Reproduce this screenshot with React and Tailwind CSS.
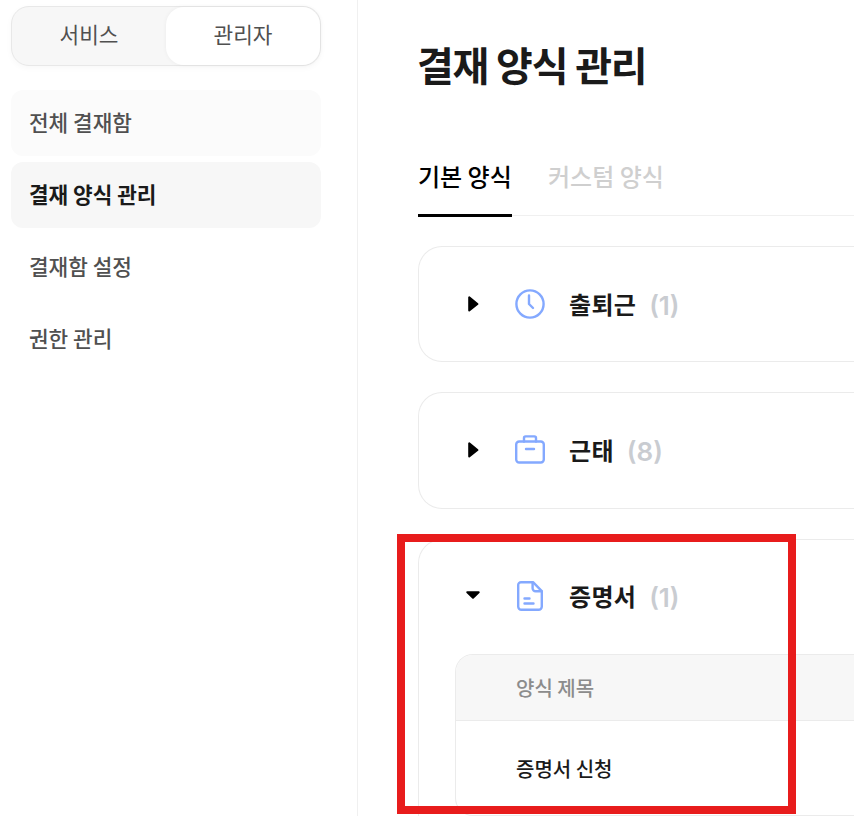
const font = { fontFamily: '"Noto Sans CJK KR", "Noto Sans", sans-serif' };

function Caret({ open }) {
  return (
    <svg width="16" height="16" viewBox="0 0 16 16" className="shrink-0">
      {open ? (
        <path d="M1.3 4.2h11.4L7 9.8z" fill="#000" stroke="#000" strokeWidth="2" strokeLinejoin="round" />
      ) : (
        <path d="M3.2 1.4v13L11.4 8z" fill="#000" stroke="#000" strokeWidth="2" strokeLinejoin="round" />
      )}
    </svg>
  );
}

const iconProps = {
  width: 30,
  height: 30,
  viewBox: "0 0 30 30",
  fill: "none",
  stroke: "#84a9ff",
  strokeWidth: 2.4,
  strokeLinecap: "round",
  strokeLinejoin: "round",
  className: "shrink-0",
};

function Clock() {
  return (
    <svg {...iconProps}>
      <circle cx="15" cy="15" r="13.6" />
      <path d="M14 6.5V15l4 4" />
    </svg>
  );
}

function Bag() {
  return (
    <svg {...iconProps}>
      <rect x="1.2" y="6.5" width="27.6" height="21" rx="3" />
      <path d="M9 6.5V3a1.6 1.6 0 0 1 1.6-1.6h8.8A1.6 1.6 0 0 1 21 3v3.5M11 14h8" />
    </svg>
  );
}

function Doc() {
  return (
    <svg {...iconProps}>
      <path d="M6 1.2h12l8.8 9v15.4a3.2 3.2 0 0 1-3.2 3.2H6.4a3.2 3.2 0 0 1-3.2-3.2V4a2.8 2.8 0 0 1 2.8-2.8z" />
      <path d="M17.6 1.6v5.6a3 3 0 0 0 3 3h6M9.5 17.5h5M9.5 22.5h9" />
    </svg>
  );
}

function Header({ open, icon, name, count }) {
  return (
    <>
      <Caret open={open} />
      <div className="flex items-center gap-[24px] ml-[33px]">
        {icon}
        <div className="flex items-center gap-[13px]">
          <span className="text-[24px] font-semibold text-[#1a1a1a] tracking-[0.3px]">{name}</span>
          <span className="font-['Inter'] mt-[3px] text-[26px] font-semibold text-[#c9ccd1]">({count})</span>
        </div>
      </div>
    </>
  );
}

function Group({ icon, name, count, h }) {
  return (
    <section className={`border border-r-0 border-[#ebebeb] rounded-l-[24px] ${h}`}>
      <div className="flex items-center pl-[47px] h-[114px]">
        <Header icon={icon} name={name} count={count} />
      </div>
    </section>
  );
}

const nav = "h-[66px] rounded-[12px] pl-[18px] pb-[2px] flex items-center text-[21.33px] font-medium";

export default function App() {
  return (
    <div style={font} className="w-[854px] h-[816px] overflow-hidden bg-white flex">
      <aside className="w-[358px] shrink-0 border-r border-[#f0f0f0] pl-[11px] pt-[6px]">
        <div className="w-[310px] h-[60px] rounded-[18px] border border-[#e8e8e8] bg-[#f7f7f7] flex shadow-[0_2px_6px_rgba(0,0,0,0.03)]">
          <button className="flex-1 pb-[4px] text-[21.33px] text-[#505050]">서비스</button>
          <button className="w-[154px] bg-white rounded-[18px] pb-[4px] text-[21.33px] text-[#505050] shadow-[0_0_4px_rgba(0,0,0,0.05)]">관리자</button>
        </div>
        <nav className="mt-[24px] w-[310px] flex flex-col gap-[6px]">
          <div className={`${nav} bg-[#fbfbfb] text-[#505050]`}>전체 결재함</div>
          <div className={`${nav} bg-[#f7f7f7] text-[#1a1a1a] font-semibold`}>결재 양식 관리</div>
          <div className={`${nav} text-[#505050]`}>결재함 설정</div>
          <div className={`${nav} text-[#505050]`}>권한 관리</div>
        </nav>
      </aside>
      <main className="flex-1 min-w-0 pl-[60px]">
        <h1 className="mt-[36px] -ml-[1px] h-[56px] leading-[56px] text-[40px] font-bold text-[#1a1a1a] tracking-[-1.2px]">결재 양식 관리</h1>
        <div className="mt-[66px] flex border-b border-[#f0f0f0] h-[58px] gap-[36px] items-start">
          <div className="h-[59px] border-b-[3px] border-black w-[94px] text-[24px] font-medium text-black leading-[36px]">기본 양식</div>
          <div className="text-[24px] font-medium text-[#cfcfcf] leading-[36px]">커스텀 양식</div>
        </div>
        <div className="mt-[30px] flex flex-col gap-[30px]">
          <Group icon={<Clock />} name="출퇴근" count={1} h="h-[116px]" />
          <Group icon={<Bag />} name="근태" count={8} h="h-[117px]" />
          <section className="border border-r-0 border-[#ebebeb] rounded-l-[24px] pl-[36px] h-[300px]">
            <div className="flex items-center pl-[11px] h-[112px] mb-[2px]">
              <Header open icon={<Doc />} name="증명서" count={1} />
            </div>
            <div className="border border-r-0 border-[#ebebeb] rounded-l-[18px] overflow-hidden">
              <div className="h-[66px] bg-[#f7f7f7] border-b border-[#ebebeb] pl-[60px] flex items-center text-[20px] font-medium text-[#8c8c8c]">양식 제목</div>
              <div className="h-[94px] pl-[60px] pt-[2px] flex items-center text-[20px] font-medium text-[#1a1a1a]">증명서 신청</div>
            </div>
          </section>
        </div>
      </main>
      <div className="absolute left-[397px] top-[534px] w-[399px] h-[280px] border-[8px] border-[#e81c1c] pointer-events-none" />
    </div>
  );
}
